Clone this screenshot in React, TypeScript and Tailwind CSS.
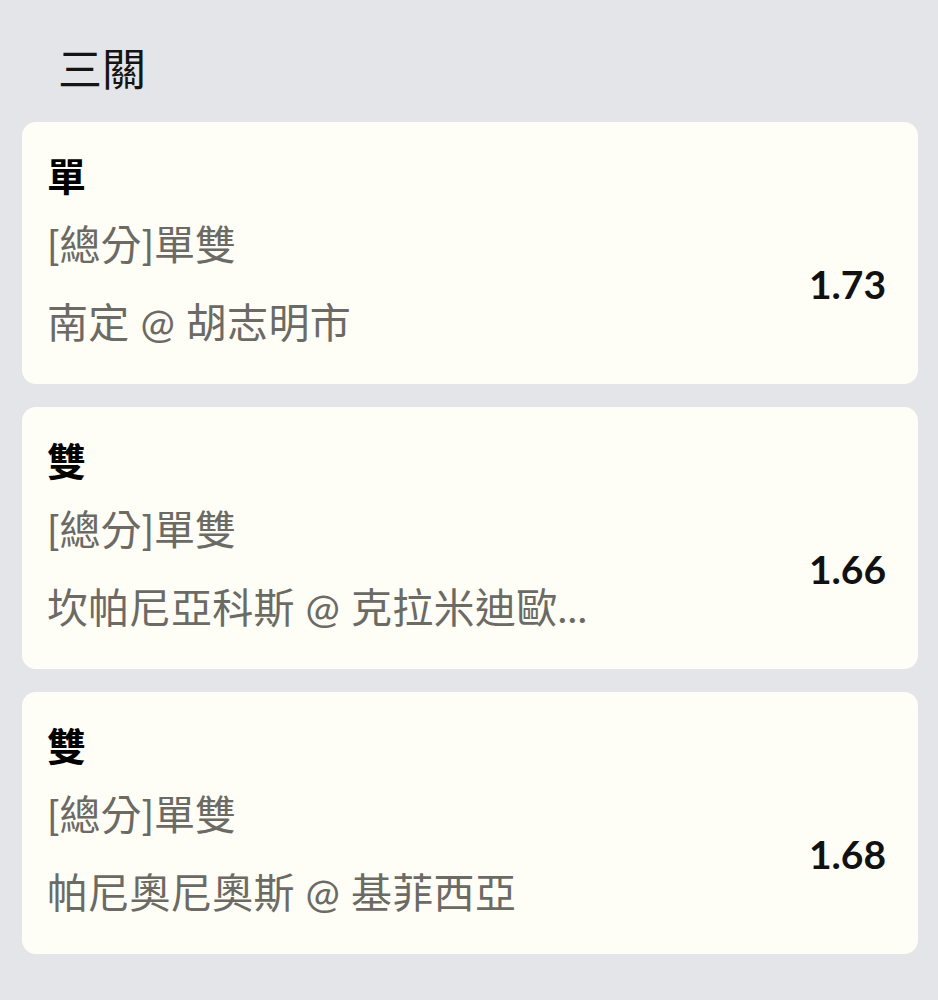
const bets = [
  { pick: "單", market: "[總分]單雙", match: "南定 @ 胡志明市", odds: "1.73" },
  { pick: "雙", market: "[總分]單雙", match: "坎帕尼亞科斯 @ 克拉米迪歐...", odds: "1.66" },
  { pick: "雙", market: "[總分]單雙", match: "帕尼奧尼奧斯 @ 基菲西亞", odds: "1.68" },
]

function BetCard({ pick, market, match, odds }: (typeof bets)[number]) {
  return (
    <div className="flex h-[262px] flex-col rounded-[14px] bg-[#fefdf6] pl-[25px] pr-[32px] pt-[24px]">
      <div className="h-[60px] text-[39px] font-bold leading-[60px] text-black">{pick}</div>
      <div className="flex items-center">
        <div className="min-w-0 flex-1 text-[41px] leading-[78px] text-[#6b6a64]">
          <div className="whitespace-nowrap">{market}</div>
          <div className="whitespace-nowrap tracking-[0.3px]">{match}</div>
        </div>
        <div className="text-[39px] font-bold text-[#111]">{odds}</div>
      </div>
    </div>
  )
}

export default function App() {
  return (
    <div
      className="min-h-[1000px] bg-[#e4e5e8] pl-[22px] pr-[20px] pt-[39px]"
      style={{ fontFamily: 'Lato, "Noto Sans CJK TC", sans-serif' }}
    >
      <h1 className="mb-[23px] h-[60px] pl-[36px] text-[44px] font-normal leading-[60px] text-[#141414]">三關</h1>
      <div className="flex flex-col gap-[23px]">
        {bets.map((bet, i) => (
          <BetCard key={i} {...bet} />
        ))}
      </div>
    </div>
  )
}
